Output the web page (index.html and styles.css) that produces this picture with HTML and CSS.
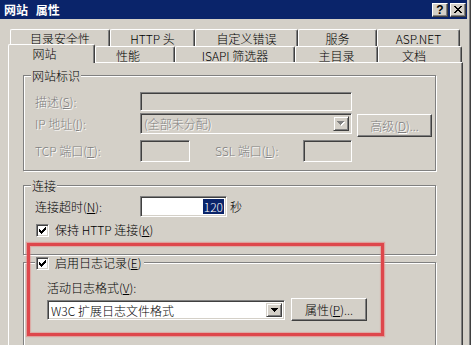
FILE: index.html
```html
<!DOCTYPE html>
<html lang="zh-CN">
<head>
<meta charset="utf-8">
<title>网站 属性</title>
<link rel="stylesheet" href="styles.css">
</head>
<body>
<div class="window">
  <div class="titlebar">
    <span class="title">网站 属性</span>
    <span class="capbtn help">?</span>
    <span class="capbtn close">
      <svg width="8" height="7" viewBox="0 0 8 7" shape-rendering="crispEdges"><path d="M0 0h2v1h-2zM6 0h2v1h-2zM1 1h2v1h-2zM5 1h2v1h-2zM2 2h4v1h-4zM3 3h2v1h-2zM2 4h4v1h-4zM1 5h2v1h-2zM5 5h2v1h-2zM0 6h2v1h-2zM6 6h2v1h-2z" fill="#000"/></svg>
    </span>
  </div>
  <div class="client">
    <div class="tabrow back">
      <div class="tab t1">目录安全性</div>
      <div class="tab t2">HTTP 头</div>
      <div class="tab t3">自定义错误</div>
      <div class="tab t4">服务</div>
      <div class="tab t5">ASP.NET</div>
    </div>
    <div class="tabrow front">
      <div class="tab sel s1">网站</div>
      <div class="tab s2">性能</div>
      <div class="tab s3">ISAPI 筛选器</div>
      <div class="tab s4">主目录</div>
      <div class="tab s5">文档</div>
    </div>
    <div class="panel">
      <div class="group g1">
        <div class="glabel">网站标识</div>
        <div class="row r1">
          <span class="lbl col dis">描述(<u>S</u>):</span>
          <span class="field sunken f-desc"></span>
        </div>
        <div class="row r2">
          <span class="lbl col dis tall">IP 地址(<u>I</u>):</span>
          <span class="combo sunken c-ip">
            <span class="ctext dis">(全部未分配)</span>
            <span class="dropbtn"><svg width="8" height="5" viewBox="0 0 8 5" shape-rendering="crispEdges"><path d="M1 1h7v1h-7zM2 2h5v1h-5zM3 3h3v1h-3zM4 4h1v1h-1z" fill="#fff"/><path d="M0 0h7v1h-7zM1 1h5v1h-5zM2 2h3v1h-3zM3 3h1v1h-1z" fill="#808080"/></svg></span>
          </span>
          <span class="btn raised b-adv dis">高级(<u>D</u>)...</span>
        </div>
        <div class="row r3">
          <span class="lbl col dis">TCP 端口(<u>T</u>):</span>
          <span class="field sunken f-tcp"></span>
          <span class="lbl dis ssl">SSL 端口(<u>L</u>):</span>
          <span class="field sunken f-ssl"></span>
        </div>
      </div>

      <div class="group g2">
        <div class="glabel">连接</div>
        <div class="row r4">
          <span class="lbl col">连接超时(<u>N</u>):</span>
          <span class="field sunken white f-time"><span class="seltext">120</span></span>
          <span class="lbl unit">秒</span>
        </div>
        <div class="row r5">
          <span class="check sunken"><svg width="7" height="7" viewBox="0 0 7 7" shape-rendering="crispEdges"><path d="M6 0h1v1h-1zM5 1h2v1h-2zM0 2h1v1h-1zM4 2h3v1h-3zM0 3h2v1h-2zM3 3h3v1h-3zM0 4h5v1h-5zM1 5h3v1h-3zM2 6h1v1h-1z" fill="#000"/></svg></span>
          <span class="lbl">保持 HTTP 连接(<u>K</u>)</span>
        </div>
      </div>

      <div class="group g3">
        <div class="glabel chklabel">
          <span class="check sunken"><svg width="7" height="7" viewBox="0 0 7 7" shape-rendering="crispEdges"><path d="M6 0h1v1h-1zM5 1h2v1h-2zM0 2h1v1h-1zM4 2h3v1h-3zM0 3h2v1h-2zM3 3h3v1h-3zM0 4h5v1h-5zM1 5h3v1h-3zM2 6h1v1h-1z" fill="#000"/></svg></span>
          <span class="lbl">启用日志记录(<u>E</u>)</span>
        </div>
        <div class="row r6">
          <span class="lbl">活动日志格式(<u>V</u>):</span>
        </div>
        <div class="row r7">
          <span class="combo sunken white c-log">
            <span class="ctext">W3C 扩展日志文件格式</span>
            <span class="dropbtn"><svg width="7" height="4" viewBox="0 0 7 4" shape-rendering="crispEdges"><path d="M0 0h7v1h-7zM1 1h5v1h-5zM2 2h3v1h-3zM3 3h1v1h-1z" fill="#000"/></svg></span>
          </span>
          <span class="btn raised b-prop">属性(<u>P</u>)...</span>
        </div>
      </div>
    </div>
  </div>
  <div class="redbox"></div>
</div>
</body>
</html>
```

FILE: styles.css
```css
* { box-sizing: border-box; }

html, body {
  margin: 0;
  padding: 0;
  background: #d4d0c8;
  overflow: hidden;
}

body {
  font-family: "Noto Sans CJK SC", "Noto Sans", sans-serif;
  font-size: 12px;
  font-weight: 300;
  line-height: 14px;
  color: #000;
}

u { text-decoration: underline; text-underline-offset: 1px; }

.window {
  position: relative;
  width: 471px;
  height: 345px;
  background: #d4d0c8;
  padding-right: 3px;
  border-right: 1px solid #404040;
  box-shadow: inset -1px 0 #808080;
  overflow: hidden;
}

/* ---------- title bar ---------- */
.titlebar {
  height: 19px;
  background: #0a246a;
  display: flex;
  align-items: center;
  padding: 0 1px 0 4px;
}

.title {
  flex: 1;
  color: #fff;
  font-weight: bold;
  word-spacing: 5px;
  line-height: 19px;
}

.capbtn {
  width: 16px;
  height: 14px;
  background: #d4d0c8;
  border: 1px solid;
  border-color: #fff #404040 #404040 #fff;
  box-shadow: inset -1px -1px #808080;
  display: flex;
  align-items: center;
  justify-content: center;
}

.help {
  margin-right: 2px;
  font-family: "Liberation Sans", sans-serif;
  font-weight: bold;
  font-size: 12px;
  line-height: 12px;
}

/* ---------- tabs ---------- */
.client {
  padding-top: 10px;
}

.tabrow {
  display: flex;
  align-items: flex-end;
}

.tabrow.back {
  height: 17px;
  padding-left: 10px;
}

.tabrow.front {
  height: 16px;
  padding-left: 8px;
}

.tab {
  height: 100%;
  background: #d4d0c8;
  border-left: 1px solid #fff;
  border-top: 1px solid #fff;
  border-right: 1px solid #404040;
  box-shadow: inset -1px 0 #808080;
  border-top-left-radius: 2px;
  border-top-right-radius: 2px;
  display: flex;
  align-items: center;
  justify-content: center;
  padding-top: 2px;
  line-height: 12px;
  white-space: nowrap;
}

.tab.sel {
  position: relative;
  z-index: 1;
  height: 19px;
  margin-bottom: -1px;
  padding-top: 0;
}

.t1 { width: 100px; }
.t2 { width: 85px; }
.t3 { width: 103px; }
.t4 { width: 79px; }
.t5 { width: 83px; }

.s1 { width: 87px; padding-right: 14px; }
.s2 { width: 80px; padding-right: 14px; }
.s3 { width: 120px; }
.s4 { width: 83px; }
.s5 { width: 84px; padding-right: 12px; }

/* ---------- panel ---------- */
.panel {
  margin-left: 8px;
  width: 455px;
  height: 300px;
  border-left: 1px solid #fff;
  border-top: 1px solid #fff;
  border-right: 1px solid #404040;
  box-shadow: inset -1px 0 #808080;
  padding: 12px 0 0 14px;
}

.group {
  width: 413px;
  border: 1px solid #808080;
  box-shadow: 1px 1px 0 #fff, inset 1px 1px 0 #fff;
}

.glabel {
  width: fit-content;
  height: 14px;
  line-height: 14px;
  margin: -7px 0 0 7px;
  padding: 0 1px;
  background: #d4d0c8;
  white-space: nowrap;
}

.g1 { padding-bottom: 8px; }
.g2 { margin-top: 14px; padding-bottom: 17px; }
.g3 { margin-top: 7px; height: 120px; }

.row {
  display: flex;
  align-items: center;
  padding-left: 11px;
  white-space: nowrap;
}

.r1 { margin-top: 9px; height: 19px; }
.r2 { margin-top: 2px; height: 24px; align-items: flex-start; }
.r3 { margin-top: 3px; height: 22px; }
.r4 { margin-top: 3px; height: 21px; }
.r5 { margin-top: 6px; height: 14px; padding-left: 12px; }
.r6 { margin-top: 11px; height: 14px; padding-left: 23px; }
.r7 { margin-top: 3px; height: 23px; padding-left: 23px; }

.lbl { line-height: 14px; }
.col { width: 105px; flex: none; }
.tall { line-height: 21px; }

.dis {
  color: #808080;
  text-shadow: 1px 1px 0 #fff;
}

/* ---------- controls ---------- */
.sunken {
  border: 1px solid;
  border-color: #808080 #fff #fff #808080;
  box-shadow: inset 1px 1px 0 #404040, inset -1px -1px 0 #d4d0c8;
  background: #d4d0c8;
}

.sunken.white { background: #fff; }

.field { display: block; flex: none; height: 100%; }

.f-desc { width: 212px; }
.f-tcp { width: 50px; }
.f-ssl { width: 49px; }
.ssl { width: 88px; margin-left: 25px; }

.f-time {
  width: 87px;
  display: flex;
  align-items: center;
  justify-content: flex-end;
  padding: 2px;
}

.seltext {
  background: #0a246a;
  color: #fff;
  line-height: 15px;
  padding: 0 1px;
}

.unit { margin-left: 3px; }

.combo {
  display: flex;
  flex: none;
  padding: 2px;
}

.c-ip { width: 212px; height: 21px; }
.c-log { width: 238px; height: 20px; }

.ctext {
  flex: 1;
  padding-left: 1px;
  line-height: 16px;
}

.dropbtn {
  width: 16px;
  flex: none;
  background: #d4d0c8;
  border: 1px solid;
  border-color: #d4d0c8 #404040 #404040 #d4d0c8;
  box-shadow: inset 1px 1px 0 #fff, inset -1px -1px 0 #808080;
  display: flex;
  align-items: center;
  justify-content: center;
}

.raised {
  border: 1px solid;
  border-color: #fff #404040 #404040 #fff;
  box-shadow: inset -1px -1px 0 #808080;
  background: #d4d0c8;
}

.btn {
  display: flex;
  align-items: center;
  justify-content: center;
  height: 23px;
  flex: none;
}

.b-adv { width: 75px; margin: 1px 0 0 5px; }
.b-prop { width: 76px; margin-left: 6px; }

.check {
  width: 13px;
  height: 13px;
  flex: none;
  background: #fff;
  display: flex;
  align-items: center;
  justify-content: center;
  margin-right: 6px;
}

.chklabel {
  display: flex;
  align-items: center;
  margin-left: 11px;
  padding-right: 3px;
}

/* ---------- annotation overlay ---------- */
.redbox {
  position: absolute;
  left: 27px;
  top: 243px;
  width: 357px;
  height: 93px;
  border: 3px solid #de474c;
  box-shadow: 0 0 1px 1px rgba(232, 120, 120, 0.55), inset 0 0 1px 1px rgba(232, 120, 120, 0.45);
  pointer-events: none;
}
```
